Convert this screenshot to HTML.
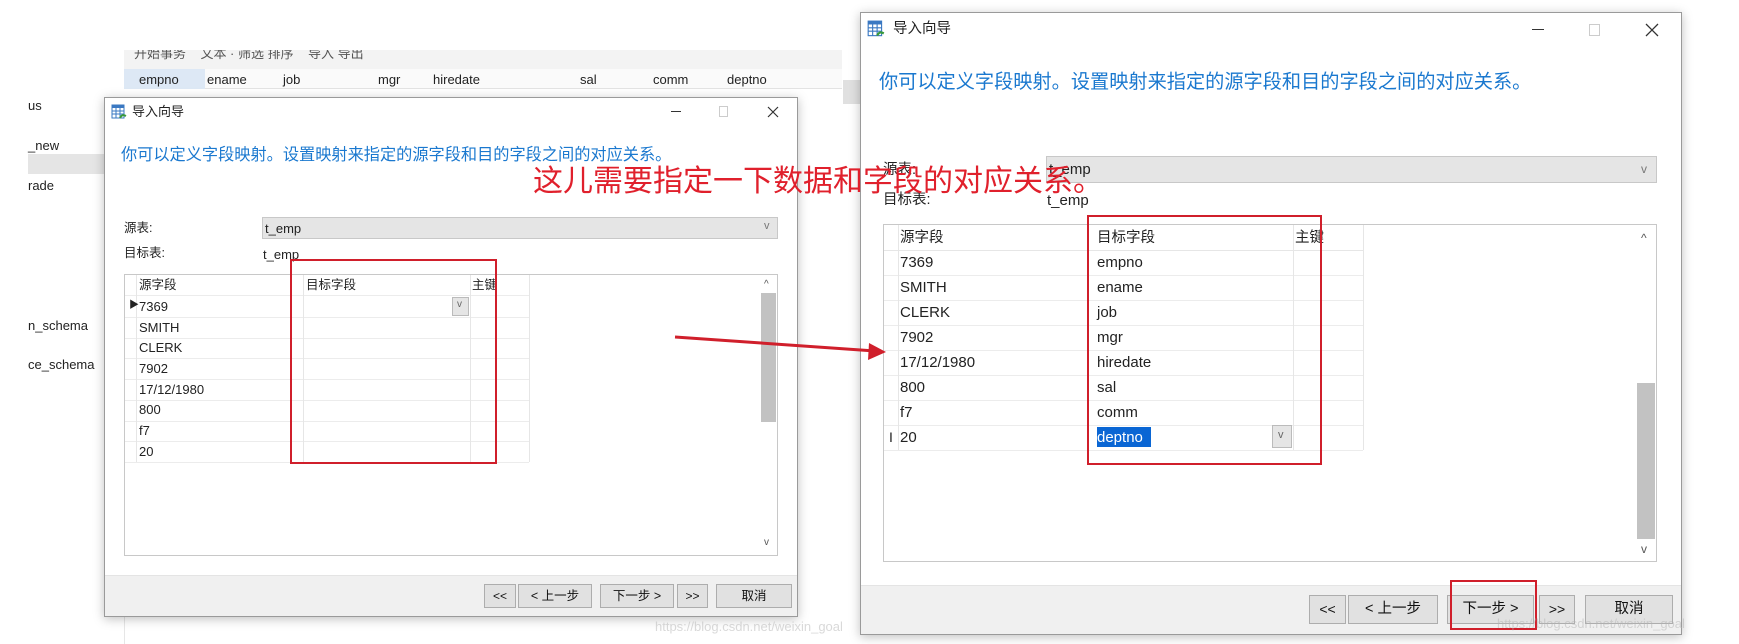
<!DOCTYPE html>
<html><head><meta charset="utf-8">
<style>
*{margin:0;padding:0;box-sizing:border-box}
body{width:1739px;height:644px;background:#fff;position:relative;overflow:hidden;font-family:"Liberation Sans","Noto Sans CJK SC",sans-serif;color:#222}
.a{position:absolute;white-space:nowrap}
.t{position:absolute;white-space:nowrap;line-height:1}
.dlg{position:absolute;background:#fff;border:1px solid #9a9a9a;box-shadow:0 2px 10px rgba(0,0,0,.25)}
.btn{position:absolute;background:#e1e1e1;border:1px solid #adadad;text-align:center;color:#111}
.red{position:absolute;border:2px solid #d01f2b}
.hl{position:absolute;height:1px;background:#ececec}
.vl{position:absolute;width:1px;background:#e6e6e6}
</style></head><body>

<!-- background app -->
<div class="a" style="left:124px;top:50px;width:718px;height:19px;background:#f3f3f3;overflow:hidden;font-size:13px;color:#555">
 <span class="t" style="left:10px;top:-3px">开始事务 &nbsp;&nbsp; 文本 · 筛选 排序 &nbsp;&nbsp; 导入 导出</span>
</div>
<div class="a" style="left:124px;top:69px;width:718px;height:20px;background:#fafafa;border-bottom:1px solid #e3e3e3"></div>
<div class="a" style="left:124px;top:69px;width:81px;height:20px;background:#dde8f5"></div>
<div class="t" style="left:139px;top:73px;font-size:13px">empno</div>
<div class="t" style="left:207px;top:73px;font-size:13px">ename</div>
<div class="t" style="left:283px;top:73px;font-size:13px">job</div>
<div class="t" style="left:378px;top:73px;font-size:13px">mgr</div>
<div class="t" style="left:433px;top:73px;font-size:13px">hiredate</div>
<div class="t" style="left:580px;top:73px;font-size:13px">sal</div>
<div class="t" style="left:653px;top:73px;font-size:13px">comm</div>
<div class="t" style="left:727px;top:73px;font-size:13px">deptno</div>
<div class="a" style="left:843px;top:80px;width:17px;height:24px;background:#e0e0e0"></div>
<div class="vl" style="left:124px;top:600px;height:44px"></div>

<div class="t" style="left:28px;top:99px;font-size:13px">us</div>
<div class="t" style="left:28px;top:139px;font-size:13px">_new</div>
<div class="a" style="left:28px;top:154px;width:76px;height:20px;background:#e5e5e5"></div>
<div class="t" style="left:28px;top:179px;font-size:13px">rade</div>
<div class="t" style="left:28px;top:319px;font-size:13px">n_schema</div>
<div class="t" style="left:28px;top:358px;font-size:13px">ce_schema</div>

<!-- LEFT DIALOG -->
<div class="dlg" style="left:104px;top:97px;width:694px;height:520px"></div>
<svg class="a" style="left:111px;top:104px" width="16" height="17" viewBox="0 0 16 17"><rect x="1" y="1" width="12" height="13" fill="#fff" stroke="#3a78c2"/><rect x="1" y="1" width="12" height="3" fill="#3a78c2"/><path d="M1 7h12M1 10h12M5 4v10M9 4v10" stroke="#3a78c2"/><path d="M9 14c2-4 4-3 6-2" stroke="#3a9a3a" stroke-width="2" fill="none"/></svg>
<div class="t" style="left:132px;top:105px;font-size:13px">导入向导</div>
<div class="a" style="left:671px;top:111px;width:10px;height:1px;background:#333"></div>
<div class="a" style="left:719px;top:106px;width:9px;height:11px;border:1px solid #ccc"></div>
<svg class="a" style="left:767px;top:106px" width="12" height="12"><path d="M1 1L11 11M11 1L1 11" stroke="#333" stroke-width="1.2"/></svg>
<div class="t" style="left:121px;top:147px;font-size:16.2px;color:#1a78cf">你可以定义字段映射。设置映射来指定的源字段和目的字段之间的对应关系。</div>
<div class="t" style="left:124px;top:222px;font-size:12.5px">源表:</div>
<div class="a" style="left:262px;top:217px;width:516px;height:22px;background:#e5e5e5;border:1px solid #c8c8c8"></div>
<div class="t" style="left:265px;top:222px;font-size:13px">t_emp</div>
<div class="t" style="left:764px;top:221px;font-size:11px;color:#777">v</div>
<div class="t" style="left:124px;top:247px;font-size:12.5px">目标表:</div>
<div class="t" style="left:263px;top:248px;font-size:13px">t_emp</div>
<div class="a" style="left:124px;top:274px;width:654px;height:282px;border:1px solid #c8c8c8;background:#fff"></div>
<div class="hl" style="left:125px;top:295px;width:404px"></div>
<div class="hl" style="left:125px;top:317px;width:404px"></div>
<div class="hl" style="left:125px;top:338px;width:404px"></div>
<div class="hl" style="left:125px;top:358px;width:404px"></div>
<div class="hl" style="left:125px;top:379px;width:404px"></div>
<div class="hl" style="left:125px;top:400px;width:404px"></div>
<div class="hl" style="left:125px;top:421px;width:404px"></div>
<div class="hl" style="left:125px;top:441px;width:404px"></div>
<div class="hl" style="left:125px;top:462px;width:404px"></div>
<div class="vl" style="left:136px;top:275px;height:187px"></div>
<div class="vl" style="left:303px;top:275px;height:187px"></div>
<div class="vl" style="left:470px;top:275px;height:187px"></div>
<div class="vl" style="left:529px;top:275px;height:187px"></div>
<div class="t" style="left:139px;top:279px;font-size:12.5px">源字段</div>
<div class="t" style="left:306px;top:279px;font-size:12.5px">目标字段</div>
<div class="t" style="left:472px;top:279px;font-size:12.5px">主键</div>
<div class="t" style="left:129px;top:301px;font-size:10px">▶</div>
<div class="t" style="left:139px;top:300px;font-size:13px">7369</div>
<div class="a" style="left:452px;top:297px;width:17px;height:19px;background:#e5e5e5;border:1px solid #bbb"></div>
<div class="t" style="left:457px;top:300px;font-size:10px;color:#666">v</div>
<div class="t" style="left:139px;top:321px;font-size:13px">SMITH</div>
<div class="t" style="left:139px;top:341px;font-size:13px">CLERK</div>
<div class="t" style="left:139px;top:362px;font-size:13px">7902</div>
<div class="t" style="left:139px;top:383px;font-size:13px">17/12/1980</div>
<div class="t" style="left:139px;top:403px;font-size:13px">800</div>
<div class="t" style="left:139px;top:424px;font-size:13px">f7</div>
<div class="t" style="left:139px;top:445px;font-size:13px">20</div>
<div class="a" style="left:761px;top:293px;width:15px;height:129px;background:#c2c2c2"></div>
<div class="t" style="left:764px;top:280px;font-size:10px;color:#555">^</div>
<div class="t" style="left:764px;top:538px;font-size:10px;color:#555">v</div>
<div class="a" style="left:105px;top:575px;width:692px;height:41px;background:#f0f0f0;border-top:1px solid #e4e4e4"></div>
<div class="btn" style="left:484px;top:584px;width:32px;height:24px;font-size:12px;line-height:22px">&lt;&lt;</div>
<div class="btn" style="left:518px;top:584px;width:74px;height:24px;font-size:12.5px;line-height:22px">&lt; 上一步</div>
<div class="btn" style="left:600px;top:584px;width:74px;height:24px;font-size:12.5px;line-height:22px">下一步 &gt;</div>
<div class="btn" style="left:677px;top:584px;width:31px;height:24px;font-size:12px;line-height:22px">&gt;&gt;</div>
<div class="btn" style="left:716px;top:584px;width:76px;height:24px;font-size:12.5px;line-height:22px">取消</div>
<div class="red" style="left:290px;top:259px;width:207px;height:205px"></div>

<!-- RIGHT DIALOG -->
<div class="dlg" style="left:860px;top:12px;width:822px;height:623px"></div>
<svg class="a" style="left:867px;top:20px" width="18" height="19" viewBox="0 0 16 17"><rect x="1" y="1" width="12" height="13" fill="#fff" stroke="#3a78c2"/><rect x="1" y="1" width="12" height="3" fill="#3a78c2"/><path d="M1 7h12M1 10h12M5 4v10M9 4v10" stroke="#3a78c2"/><path d="M9 14c2-4 4-3 6-2" stroke="#3a9a3a" stroke-width="2" fill="none"/></svg>
<div class="t" style="left:893px;top:22px;font-size:14.5px">导入向导</div>
<div class="a" style="left:1532px;top:29px;width:12px;height:1px;background:#333"></div>
<div class="a" style="left:1589px;top:24px;width:11px;height:12px;border:1px solid #ccc"></div>
<svg class="a" style="left:1645px;top:23px" width="14" height="14"><path d="M1 1L13 13M13 1L1 13" stroke="#333" stroke-width="1.3"/></svg>
<div class="t" style="left:879px;top:73px;font-size:19.2px;color:#1a78cf">你可以定义字段映射。设置映射来指定的源字段和目的字段之间的对应关系。</div>
<div class="t" style="left:883px;top:163px;font-size:14.5px">源表:</div>
<div class="a" style="left:1046px;top:156px;width:611px;height:27px;background:#e5e5e5;border:1px solid #c8c8c8"></div>
<div class="t" style="left:1049px;top:162px;font-size:15px">t_emp</div>
<div class="t" style="left:1641px;top:163px;font-size:12px;color:#777">v</div>
<div class="t" style="left:883px;top:193px;font-size:14.5px">目标表:</div>
<div class="t" style="left:1047px;top:193px;font-size:15px">t_emp</div>
<div class="a" style="left:883px;top:224px;width:774px;height:338px;border:1px solid #c8c8c8;background:#fff"></div>
<div class="hl" style="left:884px;top:250px;width:479px;background:#e6e6e6"></div>
<div class="hl" style="left:884px;top:275px;width:479px"></div>
<div class="hl" style="left:884px;top:300px;width:479px"></div>
<div class="hl" style="left:884px;top:325px;width:479px"></div>
<div class="hl" style="left:884px;top:350px;width:479px"></div>
<div class="hl" style="left:884px;top:375px;width:479px"></div>
<div class="hl" style="left:884px;top:400px;width:479px"></div>
<div class="hl" style="left:884px;top:425px;width:479px"></div>
<div class="hl" style="left:884px;top:450px;width:479px"></div>
<div class="vl" style="left:898px;top:225px;height:225px"></div>
<div class="vl" style="left:1087px;top:225px;height:225px"></div>
<div class="vl" style="left:1293px;top:225px;height:225px"></div>
<div class="vl" style="left:1363px;top:225px;height:225px"></div>
<div class="t" style="left:900px;top:231px;font-size:14.5px">源字段</div>
<div class="t" style="left:1097px;top:231px;font-size:14.5px">目标字段</div>
<div class="t" style="left:1295px;top:231px;font-size:14.5px">主键</div>
<div class="t" style="left:900px;top:255px;font-size:15px">7369</div><div class="t" style="left:1097px;top:255px;font-size:15px">empno</div>
<div class="t" style="left:900px;top:280px;font-size:15px">SMITH</div><div class="t" style="left:1097px;top:280px;font-size:15px">ename</div>
<div class="t" style="left:900px;top:305px;font-size:15px">CLERK</div><div class="t" style="left:1097px;top:305px;font-size:15px">job</div>
<div class="t" style="left:900px;top:330px;font-size:15px">7902</div><div class="t" style="left:1097px;top:330px;font-size:15px">mgr</div>
<div class="t" style="left:900px;top:355px;font-size:15px">17/12/1980</div><div class="t" style="left:1097px;top:355px;font-size:15px">hiredate</div>
<div class="t" style="left:900px;top:380px;font-size:15px">800</div><div class="t" style="left:1097px;top:380px;font-size:15px">sal</div>
<div class="t" style="left:900px;top:405px;font-size:15px">f7</div><div class="t" style="left:1097px;top:405px;font-size:15px">comm</div>
<div class="t" style="left:889px;top:430px;font-size:14px">I</div>
<div class="t" style="left:900px;top:430px;font-size:15px">20</div>
<div class="a" style="left:1097px;top:427px;width:54px;height:20px;background:#0a66d4"></div>
<div class="t" style="left:1097px;top:430px;font-size:15px;color:#fff">deptno</div>
<div class="a" style="left:1272px;top:425px;width:20px;height:23px;background:#e5e5e5;border:1px solid #bbb"></div>
<div class="t" style="left:1278px;top:430px;font-size:11px;color:#666">v</div>
<div class="a" style="left:1637px;top:383px;width:18px;height:156px;background:#c2c2c2"></div>
<div class="t" style="left:1641px;top:232px;font-size:12px;color:#555">^</div>
<div class="t" style="left:1641px;top:543px;font-size:12px;color:#555">v</div>
<div class="a" style="left:861px;top:585px;width:820px;height:49px;background:#f0f0f0;border-top:1px solid #e4e4e4"></div>
<div class="btn" style="left:1309px;top:595px;width:37px;height:29px;font-size:14px;line-height:27px">&lt;&lt;</div>
<div class="btn" style="left:1348px;top:595px;width:90px;height:29px;font-size:14.5px;line-height:27px">&lt; 上一步</div>
<div class="btn" style="left:1447px;top:595px;width:87px;height:29px;font-size:14.5px;line-height:27px">下一步 &gt;</div>
<div class="btn" style="left:1539px;top:595px;width:36px;height:29px;font-size:14px;line-height:27px">&gt;&gt;</div>
<div class="btn" style="left:1585px;top:595px;width:88px;height:29px;font-size:14.5px;line-height:27px">取消</div>
<div class="red" style="left:1087px;top:215px;width:235px;height:250px"></div>
<div class="red" style="left:1450px;top:580px;width:87px;height:50px"></div>

<!-- watermarks -->
<div class="t" style="left:655px;top:620px;font-size:13px;color:rgba(180,180,180,.5)">https://blog.csdn.net/weixin_goal</div>
<div class="t" style="left:1497px;top:617px;font-size:13px;color:rgba(180,180,180,.5)">https://blog.csdn.net/weixin_goal</div>

<!-- annotation -->
<div class="t" style="left:533px;top:167px;font-size:30px;color:#e0202c">这儿需要指定一下数据和字段的对应关系。</div>
<svg class="a" style="left:670px;top:325px" width="230" height="40"><line x1="5" y1="12" x2="205" y2="26" stroke="#d01f2b" stroke-width="3"/><polygon points="216,27 199,18 198,35" fill="#d01f2b"/></svg>
</body></html>
